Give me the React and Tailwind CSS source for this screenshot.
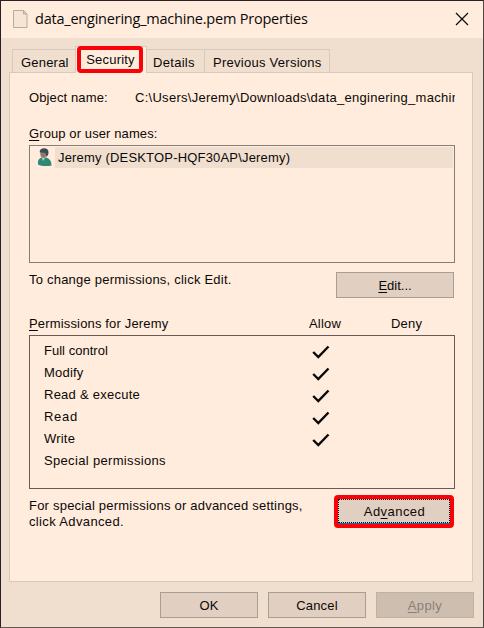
import React from "react";

const permissions = [
  ["Full control", true, "tracking-[0.02px]"],
  ["Modify", true, "tracking-[0.2px]"],
  ["Read & execute", true, "tracking-[0.25px]"],
  ["Read", true, "tracking-[0.7px]"],
  ["Write", true, "tracking-[0.2px]"],
  ["Special permissions", false, "tracking-[0.33px]"],
];

function FileIcon() {
  return (
    <svg width="15" height="19" viewBox="0 0 15 19" className="mt-[9px] shrink-0">
      <path d="M.5.5h10l3.500 3.500v13.500H.5z" fill="#f6e4d5" stroke="#b7aaa0" />
      <path d="M10.500 .5V4h3.500z" fill="#dccfc4" stroke="#b7aaa0" />
    </svg>
  );
}

function UserIcon() {
  return (
    <svg width="16" height="19" viewBox="0 0 16 19" className="shrink-0">
      <path d="M1 16.500C.5 13 1.500 10.500 4.500 9.500H9c3.500 1 5.500 3.500 5.500 8C10 18.500 4 18.300 1 16.500z" fill="#2f8776" />
      <path d="M4.500 9l1.500 4 2.500-3.500z" fill="#b5d3cb" />
      <path d="M3.200 3.500h6v3.800c0 1.600-1 2.700-2.600 2.700S3.600 9 3.400 7z" fill="#94796a" />
      <path d="M2.700 4.200C2.500 1.500 4.500.3 7.200.3c3 0 4.500 1.700 4.300 4.400-.1 1.700-.8 3-2 4.300L8.500 5z" fill="#3b4b55" />
    </svg>
  );
}

function Check() {
  return (
    <svg width="18" height="14" viewBox="0 0 18 14" className="block">
      <path d="M1.200 7l5.100 5L16.500 1.500" fill="none" stroke="#0c0807" strokeWidth="2.400" />
    </svg>
  );
}

function Button({ children, className = "" }) {
  return (
    <button
      className={
        "flex h-[26px] items-center justify-center border text-[13px] leading-[15px] " +
        className
      }
    >
      <span>{children}</span>
    </button>
  );
}

export default function App() {
  return (
    <div className="flex h-[628px] w-[484px] flex-col overflow-hidden border border-t-[#282022] border-r-[#51473f] border-b-[#665950] border-l-[#282022] bg-[#f0dfcf] font-['Liberation_Sans',Arial,sans-serif] text-[13px] leading-[16px] tracking-[0.2px] whitespace-nowrap text-[#0c0807]">
      <header className="flex h-[37px] shrink-0 bg-[#ffecdc] pl-3">
        <FileIcon />
        <h1 className="ml-[7px] pt-[8px] font-['Open_Sans','Noto_Sans',sans-serif] text-[14.5px] leading-[20px] tracking-[-0.22px]">
          data_enginering_machine.pem Properties
        </h1>
        <svg width="14" height="14" viewBox="0 0 14 14" className="mt-[11px] mr-[14px] ml-auto">
          <path d="M1 1l12 12M13 1L1 13" stroke="#0c0807" strokeWidth="1.200" />
        </svg>
      </header>

      <nav className="z-10 mt-[8px] ml-[11px] flex h-[27px] shrink-0 items-end">
        <div className="h-6 w-[63px] border border-r-0 border-b-0 border-[#d9c9bb] pt-[5px] pl-2">General</div>
        <div className="h-[27px] w-[72px] border border-b-0 border-[#d9c9bb] bg-[#ffecdc] pl-px">
          <div className="-mt-px flex h-[27px] w-[66px] items-start justify-center rounded-[4px] border-4 border-[#fa0007]">
            <span className="pt-[2px] pl-px">Security</span>
          </div>
        </div>
        <div className="h-6 w-[57px] border border-x-0 border-b-0 border-[#d9c9bb] pt-[5px] pl-[6px] tracking-[0.3px]">Details</div>
        <div className="h-6 w-[126px] border border-b-0 border-[#d9c9bb] pt-[5px] pl-[8px] tracking-[0.27px]">Previous Versions</div>
      </nav>

      <main className="-mt-px ml-2 flex h-[510px] w-[464px] shrink-0 flex-col border border-[#d9c9bb] bg-[#ffecdc] pr-[17px] pl-[19px]">
        <div className="mt-[17px] flex">
          <span className="w-[106px] shrink-0 tracking-[0.12px]">Object name:</span>
          <span className="w-[320px] overflow-hidden tracking-[0.28px]">C:\Users\Jeremy\Downloads\data_enginering_machine.pem</span>
        </div>
        <div className="mt-5 tracking-[0.1px]">
          <u className="underline-offset-2">G</u>roup or user names:
        </div>
        <div className="mt-[3px] h-[118px] w-[426px] shrink-0 border border-[#857d78] p-px">
          <div className="flex h-[21px]">
            <div className="w-6 pt-px pl-[6px]">
              <UserIcon />
            </div>
            <div className="flex-1 bg-[#f0dfcf] pt-[3px] pl-[3px] tracking-[0.18px]">Jeremy (DESKTOP-HQF30AP\Jeremy)</div>
          </div>
        </div>
        <div className="mt-[9px] flex justify-between">
          <span className="tracking-[0.22px]">To change permissions, click Edit.</span>
          <Button className="mr-px w-[118px] border-[#aa9e94] bg-[#e1d0c2] tracking-normal">
            <u className="underline-offset-2">E</u>dit...
          </Button>
        </div>
        <div className="mt-[18px] flex">
          <span className="w-[280px] tracking-[0.16px]">
            <u className="underline-offset-2">P</u>ermissions for Jeremy
          </span>
          <span className="w-[82px]">Allow</span>
          <span>Deny</span>
        </div>
        <div className="mt-[3px] flex h-[154px] w-[426px] shrink-0 flex-col border border-[#665c55] pt-[7px] pl-[14px]">
          {permissions.map(([name, allowed, spacing]) => (
            <div key={name} className="flex h-[22px] shrink-0">
              <span className={"w-[268px] " + spacing}>{name}</span>
              <span className="pt-[2px]">{allowed && <Check />}</span>
            </div>
          ))}
        </div>
        <div className="mt-[6px] flex justify-between">
          <p className="pt-[3px] tracking-[0.22px]">
            For special permissions or advanced settings,
            <br />
            <span className="tracking-[0.36px]">click Advanced.</span>
          </p>
          <div className="mr-px h-[33px] w-[120px] rounded-[4px] border-4 border-[#fa0007] bg-[#0f6fb5]">
            <button className="flex h-[24px] w-[112px] items-center justify-center border border-dotted border-[#0c0807] bg-[#e1d0c2] pt-px pl-px tracking-[0.45px]">
              <span>
                Ad<u className="underline-offset-2">v</u>anced
              </span>
            </button>
          </div>
        </div>
      </main>

      <footer className="mt-[10px] flex justify-end gap-[10px] pr-[9px]">
        <Button className="w-[98px] border-[#aa9e94] bg-[#e1d0c2] tracking-normal">OK</Button>
        <Button className="w-[98px] border-[#aa9e94] bg-[#e1d0c2]">Cancel</Button>
        <Button className="w-[98px] border-[#bfb1a4] bg-[#cebeb0] tracking-[0.4px] text-[#897e78]">
          <u className="underline-offset-2">A</u>pply
        </Button>
      </footer>
    </div>
  );
}
